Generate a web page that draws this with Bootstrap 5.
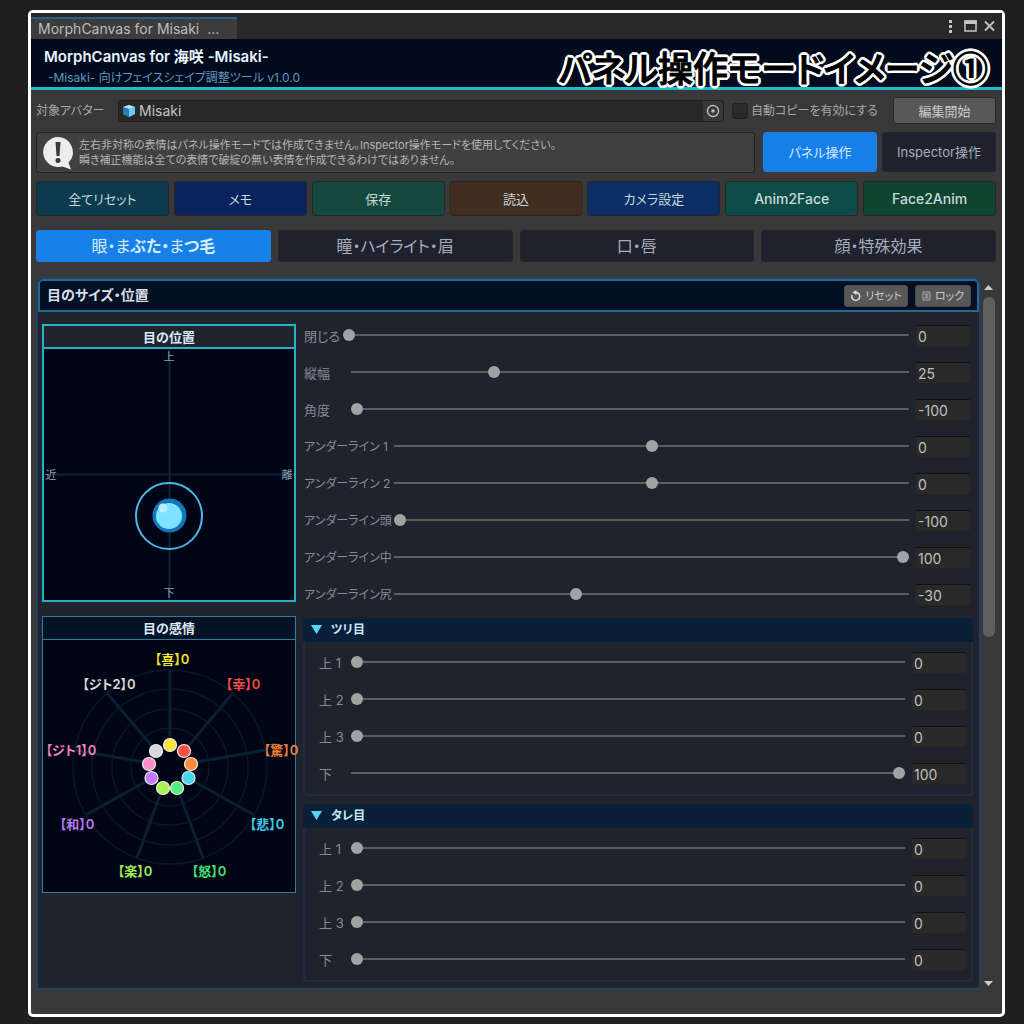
<!DOCTYPE html>
<html lang="ja">
<head>
<meta charset="utf-8">
<meta name="viewport" content="width=device-width, initial-scale=1">
<title>MorphCanvas for Misaki</title>
<link rel="stylesheet" href="https://cdn.jsdelivr.net/npm/bootstrap@5.3.0/dist/css/bootstrap.min.css">
<style>
body{background:#1f1f1f;color:#b4b4b4;font:14px/20px Inter,"Noto Sans CJK JP",sans-serif;font-feature-settings:"palt";min-height:100vh;padding:10px 19px 7px 28px}
button,input{font-feature-settings:inherit}
.win{background:#383838;border:3px solid #fff;border-radius:5px}
.tabbar{background:#282828;height:26px}
.tab-item{background:#3c3c3c;border-top:2px solid #2c5d87;color:#bdbdbd;width:206px;height:22px;padding-left:7px;white-space:pre}
.hero{background:#020a1e;border-bottom:3px solid #20bccb;height:51px;padding:7px 12px 0 13px}
.hero h1{font-size:15px;line-height:22px;font-weight:600;color:#e6f6ff}
.hero p{font-size:12px;line-height:20px;color:#5f98c0;padding-left:4px}
.caption{right:14px;top:3px;font-family:"Noto Sans CJK JP",sans-serif;font-size:35px;line-height:50px;font-weight:500;color:#000;-webkit-text-stroke:1px #000;white-space:nowrap;
text-shadow:3px 0 #fff,-3px 0 #fff,0 3px #fff,0 -3px #fff,2px 2px #fff,-2px 2px #fff,2px -2px #fff,-2px -2px #fff,3px 1px #fff,3px -1px #fff,-3px 1px #fff,-3px -1px #fff,1px 3px #fff,-1px 3px #fff,1px -3px #fff,-1px -3px #fff}
.body-pad{padding:7px 6px 0 5px}
.field-label{font-size:12px;color:#a8a8a8;white-space:nowrap}
.objfield{background:#282828;border:1px solid #202020;border-radius:3px;height:22px}
.objfield button{background:#373737;border:0;width:20px;height:20px;border-radius:0 2px 2px 0}
.check-dark{appearance:none;width:16px;height:16px;background:#2a2a2a;border:1px solid #202020;border-radius:3px;margin:0}
.ub{border:1px solid #262626;border-radius:3px;background:#585858;color:#c8c8c8;font-size:13px;line-height:18px;padding:0;text-align:center;white-space:nowrap}
.help{background:#404040;border:1px solid #232323;border-radius:3px;height:41px;font-size:11px;line-height:15px;padding:4px 6px}
.blue,.ub.blue{background:#1680e8;border-color:#1680e8;color:#d6eaff}
.dark,.ub.dark{background:#1f222d;border-color:#22252f;color:#a6adba}
.tall{height:40px}
.tool{height:35px;color:#c6dadd}
.tool.latin{font-size:14px;font-weight:500}
.maintab{height:32px;font-size:16px}
.c1{background:#0b3b4c}.c2{background:#0b235c}.c3{background:#15483d}.c4{background:#432c20}.c5{background:#0b2f66}.c6{background:#0d4c46}.c7{background:#0f452f}
.panel{background:#20232e;border:2px solid #24405c;border-radius:5px 5px 5px 0;padding-bottom:6px}
.panel-head{background:#031024;border:2px solid #226a90;border-radius:5px 5px 0 0;height:33px;padding:0 6px 0 7px}
.panel-head h2{font-size:14px;font-weight:700;color:#d8dde4}
.small-btn{height:22px;font-size:11px;border-color:#4a4a4a}
.cols{padding:12px 8px 0 4px}
.left-col{width:254px;flex:none}
.pad-box{border:1px solid #2a7f9f;background:#000515}
.pad-box.on{border:2px solid #25b2c4}
.pad-box h3{font-size:13px;line-height:22px;height:23px;font-weight:700;color:#dbeaf5;text-align:center;background:#051124;border-bottom:1px solid #2a7f9f}
.pad-box.on h3{background:#20242e;border-bottom:2px solid #25b2c4}
.pad-box svg{display:block;width:100%;overflow:visible}
.rows{display:flex;flex-direction:column;gap:15px}
.srow{display:flex;align-items:center;height:22px}
.srow label{font-size:13px;line-height:20px;color:#858a93;white-space:pre;flex:none}
.w-a{width:39px}.w-b{width:47px}.srow .w-c{width:90px;font-size:12px}.w-d{width:32px}
.srow input[type=range]{appearance:none;background:none;flex:1;min-width:0;height:20px;margin:0 6px 2px 0;padding:0}
.srow input[type=range]::-webkit-slider-runnable-track{height:2px;background:#5e5e5e}
.srow input[type=range]::-webkit-slider-thumb{appearance:none;width:12px;height:12px;border-radius:50%;background:#a3a2a2;margin-top:-5px}
.srow input[type=number]{appearance:textfield;width:56px;height:22px;background:#292929;border:1px solid #242424;border-top-color:#111;border-radius:3px;color:#c0c0c0;font-size:14px;line-height:20px;padding:0 2px}
.fold{border:2px solid #1b2e42;border-top:0;border-radius:4px;margin-left:-1px;margin-right:-2px}
.fold-head{background:#0a1f38;color:#c4e9f7;font-size:12px;line-height:24px;font-weight:700;margin:0 -2px;width:calc(100% + 4px);border:0;border-radius:4px 4px 0 0;height:24px;padding:0 8px;text-align:left}
.fold .rows{padding:10px 4px 9px 14px}
.sbar{width:15px;flex:none;padding:8px 0 1px 1px}
.sthumb{width:12px;height:340px;border-radius:6px;background:#5f5f5f}
</style>
</head>
<body class="d-flex flex-column">
<main class="win flex-grow-1 d-flex flex-column">
  <div class="tabbar d-flex justify-content-between align-items-end">
    <div class="tab-item">MorphCanvas for Misaki  ...</div>
    <div class="d-flex align-self-center align-items-center pe-1 gap-1">
      <svg width="14" height="16" fill="#c4c4c4"><path d="M5 2h3v3H5zM5 7h3v3H5zM5 12h3v3H5z"/></svg>
      <svg width="16" height="16"><path d="M3 3h11v10H3z" fill="none" stroke="#c4c4c4" stroke-width="1.500"/><path d="M2.300 2.300h12.400v3.700h-12.400z" fill="#c4c4c4"/></svg>
      <svg width="16" height="16"><path d="M3 3.500l9 9m0-9l-9 9" stroke="#c4c4c4" stroke-width="1.800"/></svg>
    </div>
  </div>
  <header class="hero position-relative">
    <h1 class="m-0">MorphCanvas for 海咲 -Misaki-</h1>
    <p class="m-0">-Misaki- 向けフェイスシェイプ調整ツール v1.0.0</p>
    <div class="caption position-absolute">パネル操作モードイメージ①</div>
  </header>
  <div class="body-pad flex-grow-1">
    <div class="d-flex align-items-center">
      <label for="avatar" class="field-label" style="width:82px">対象アバター</label>
      <div class="objfield d-flex align-items-center flex-grow-1 ps-1" style="margin-right:8px">
        <svg width="12" height="14" viewBox="0 0 12 14"><path d="M0 3l6-2 6 2v7l-6 3-6-3z" fill="#3fa3d8"/><path d="M0 3l6-2 6 2-6 2z" fill="#b4e6fb"/><path d="M0 3l6 2v8l-6-3z" fill="#2e7ba9"/><path d="M6 5l6-2v7l-6 3z" fill="#6ccdf4"/></svg>
        <input id="avatar" class="bg-transparent border-0 p-0 ms-1 flex-grow-1" style="color:#c4c4c4" value="Misaki" readonly>
        <button type="button" class="p-0 d-flex align-items-center justify-content-center" aria-label="選択"><svg width="14" height="14"><circle cx="7" cy="7" r="5.500" fill="none" stroke="#bbb" stroke-width="1.400"/><circle cx="7" cy="7" r="1.800" fill="#bbb"/></svg></button>
      </div>
      <input type="checkbox" class="check-dark" id="auto">
      <label for="auto" class="field-label" style="width:145px;padding-left:3px">自動コピーを有効にする</label>
      <button class="ub" type="button" style="width:103px;height:27px">編集開始</button>
    </div>
    <div class="d-flex mt-2">
      <div class="help flex-grow-1 d-flex align-items-center">
        <svg class="flex-shrink-0" width="32" height="34" viewBox="0 0 32 34"><path d="M15 1a15 15 0 1 0 4 29.500q4 1 9 3l-2.500-7A15 15 0 0 0 15 1z" fill="#ededed"/><path d="M12.500 6h5l-1 14h-3z" fill="#3a3a3a"/><circle cx="15" cy="24.500" r="2.500" fill="#3a3a3a"/></svg>
        <div class="ms-1">左右非対称の表情はパネル操作モードでは作成できません。Inspector操作モードを使用してください。<br>瞬き補正機能は全ての表情で破綻の無い表情を作成できるわけではありません。</div>
      </div>
      <button class="ub blue tall" type="button" style="width:114px;margin-left:8px">パネル操作</button>
      <button class="ub dark tall" type="button" style="width:114px;margin-left:5px">Inspector操作</button>
    </div>
    <div class="d-flex mt-2" style="gap:5px">
      <button type="button" class="ub tool flex-fill w-100 c1">全てリセット</button>
      <button type="button" class="ub tool flex-fill w-100 c2">メモ</button>
      <button type="button" class="ub tool flex-fill w-100 c3">保存</button>
      <button type="button" class="ub tool flex-fill w-100 c4">読込</button>
      <button type="button" class="ub tool flex-fill w-100 c5">カメラ設定</button>
      <button type="button" class="ub tool latin flex-fill w-100 c6">Anim2Face</button>
      <button type="button" class="ub tool latin flex-fill w-100 c7">Face2Anim</button>
    </div>
    <div class="d-flex" style="gap:7px;margin-top:14px">
      <button type="button" class="ub maintab w-100 blue">眼・ま<b>ぶた・</b>ま<b>つ毛</b></button>
      <button type="button" class="ub maintab w-100 dark">瞳・ハイライト・眉</button>
      <button type="button" class="ub maintab w-100 dark">口・唇</button>
      <button type="button" class="ub maintab w-100 dark">顔・特殊効果</button>
    </div>
    <div class="d-flex" style="margin-top:15px">
      <section class="panel flex-grow-1">
        <div class="panel-head d-flex align-items-center">
          <h2 class="m-0 me-auto">目のサイズ・位置</h2>
          <button type="button" class="ub small-btn d-flex align-items-center justify-content-center gap-1" style="width:64px"><svg width="11" height="12"><path d="M2 5a4 4 0 1 0 3-2.500" fill="none" stroke="#ddd" stroke-width="1.500"/><path d="M6.500 0v5L2.500 2.500z" fill="#ddd"/></svg>リセット</button>
          <button type="button" class="ub small-btn d-flex align-items-center justify-content-center gap-1" style="width:56px;margin-left:7px"><svg width="9" height="10"><path d="M1 1h7v8H1zM2.500 3h4M2.500 7h4M2.500 3l4 4M6.500 3l-4 4" fill="none" stroke="#bbb" stroke-width=".8"/></svg>ロック</button>
        </div>
        <div class="cols d-flex" style="gap:8px">
          <div class="left-col d-flex flex-column" style="gap:14px">
            <div class="pad-box on">
              <h3 class="m-0">目の位置</h3>
              <svg viewBox="0 0 250 251" font-size="11" fill="#8aa0b0" text-anchor="middle" role="img" aria-label="目の位置">
                <path d="M125.500 0v251M0 125.500h250" stroke="#0d2438" stroke-width="2"/>
                <text x="125" y="12">上</text><text x="125" y="248">下</text><text x="7" y="130">近</text><text x="243" y="130">離</text>
                <circle cx="125" cy="167" r="33" fill="none" stroke="#4bb8e6" stroke-width="2"/>
                <circle cx="125.500" cy="166.500" r="17" fill="#1278bd"/><circle cx="125" cy="167" r="13" fill="#7ee3ff"/><circle cx="119" cy="159" r="4.500" fill="#b8eeff"/>
              </svg>
            </div>
            <div class="pad-box">
              <h3 class="m-0">目の感情</h3>
              <svg viewBox="0 0 252 252" font-size="13" font-weight="600" text-anchor="middle" role="img" aria-label="目の感情">
                <g fill="none" stroke="#071727" stroke-width="1.500"><circle cx="127" cy="127" r="39"/><circle cx="127" cy="127" r="58"/><circle cx="127" cy="127" r="78"/><circle cx="127" cy="127" r="97"/></g>
                <path stroke="#092033" stroke-width="3" d="M127 106V30M141 111L190 53M148 123L223 110M145 138L211 175M134 147L160 218M120 147L94 218M109 138L43 175M106 123L31 110M113 111L64 53"/>
                <g stroke="#eee" stroke-width="1.200"><circle cx="127" cy="105" r="6.500" fill="#ffe53b"/><circle cx="141" cy="111" r="6.500" fill="#ff5147"/><circle cx="148" cy="124" r="6.500" fill="#ff8a3c"/><circle cx="145.500" cy="138" r="6.500" fill="#45d6ef"/><circle cx="134" cy="148" r="6.500" fill="#55ef7c"/><circle cx="120" cy="148" r="6.500" fill="#a6f352"/><circle cx="108.500" cy="138" r="6.500" fill="#c27dff"/><circle cx="106" cy="124" r="6.500" fill="#ff8cc8"/><circle cx="113" cy="111" r="6.500" fill="#d8d8d8"/></g>
                <text x="129" y="24" fill="#f2df36">【喜】0</text><text x="200" y="49" fill="#f24a44">【幸】0</text><text x="238" y="115" fill="#f08038">【驚】0</text><text x="224" y="189" fill="#42cfe8">【悲】0</text><text x="166" y="236" fill="#46e070">【怒】0</text><text x="92" y="236" fill="#a0ea50">【楽】0</text><text x="34" y="189" fill="#b577f0">【和】0</text><text x="28" y="115" fill="#ee80bb">【ジト1】0</text><text x="66" y="49" fill="#d8d8d8">【ジト2】0</text>
              </svg>
            </div>
          </div>
          <div class="flex-grow-1">
            <div class="rows" style="padding-top:1px">
              <div class="srow"><label class="w-a" for="s1">閉じる</label><input id="s1" type="range" value="0"><input type="number" value="0" aria-label="閉じる"></div>
              <div class="srow"><label class="w-b" for="s2">縦幅</label><input id="s2" type="range" value="25"><input type="number" value="25" aria-label="縦幅"></div>
              <div class="srow"><label class="w-b" for="s3">角度</label><input id="s3" type="range" min="-100" value="-100"><input type="number" value="-100" aria-label="角度"></div>
              <div class="srow"><label class="w-c" for="s4">アンダーライン 1</label><input id="s4" type="range" min="-100" value="0"><input type="number" value="0" aria-label="アンダーライン 1"></div>
              <div class="srow"><label class="w-c" for="s5">アンダーライン 2</label><input id="s5" type="range" min="-100" value="0"><input type="number" value="0" aria-label="アンダーライン 2"></div>
              <div class="srow"><label class="w-c" for="s6">アンダーライン頭</label><input id="s6" type="range" min="-100" value="-100"><input type="number" value="-100" aria-label="アンダーライン頭"></div>
              <div class="srow"><label class="w-c" for="s7">アンダーライン中</label><input id="s7" type="range" min="-100" value="100"><input type="number" value="100" aria-label="アンダーライン中"></div>
              <div class="srow"><label class="w-c" for="s8">アンダーライン尻</label><input id="s8" type="range" min="-100" value="-30"><input type="number" value="-30" aria-label="アンダーライン尻"></div>
            </div>
            <div class="fold" style="margin-top:12px">
              <button type="button" class="fold-head d-flex align-items-center"><svg class="me-2" width="12" height="10"><path d="M0 0h11L5.500 9z" fill="#58d5fa"/></svg>ツリ目</button>
              <div class="rows">
                <div class="srow"><label class="w-d" for="t1">上 1</label><input id="t1" type="range" value="0"><input type="number" value="0" aria-label="ツリ目 上 1"></div>
                <div class="srow"><label class="w-d" for="t2">上 2</label><input id="t2" type="range" value="0"><input type="number" value="0" aria-label="ツリ目 上 2"></div>
                <div class="srow"><label class="w-d" for="t3">上 3</label><input id="t3" type="range" value="0"><input type="number" value="0" aria-label="ツリ目 上 3"></div>
                <div class="srow"><label class="w-d" for="t4">下</label><input id="t4" type="range" value="100"><input type="number" value="100" aria-label="ツリ目 下"></div>
              </div>
            </div>
            <div class="fold mt-2">
              <button type="button" class="fold-head d-flex align-items-center"><svg class="me-2" width="12" height="10"><path d="M0 0h11L5.500 9z" fill="#58d5fa"/></svg>タレ目</button>
              <div class="rows">
                <div class="srow"><label class="w-d" for="u1">上 1</label><input id="u1" type="range" value="0"><input type="number" value="0" aria-label="タレ目 上 1"></div>
                <div class="srow"><label class="w-d" for="u2">上 2</label><input id="u2" type="range" value="0"><input type="number" value="0" aria-label="タレ目 上 2"></div>
                <div class="srow"><label class="w-d" for="u3">上 3</label><input id="u3" type="range" value="0"><input type="number" value="0" aria-label="タレ目 上 3"></div>
                <div class="srow"><label class="w-d" for="u4">下</label><input id="u4" type="range" value="0"><input type="number" value="0" aria-label="タレ目 下"></div>
              </div>
            </div>
          </div>
        </div>
      </section>
      <div class="sbar d-flex flex-column align-items-center">
        <svg class="flex-shrink-0" width="10" height="12"><path d="M0 5l4.500-5L9 5z" fill="#ccc"/></svg>
        <div class="sthumb"></div>
        <svg class="mt-auto flex-shrink-0" width="10" height="10"><path d="M0 2h9L4.500 7z" fill="#ccc"/></svg>
      </div>
    </div>
  </div>
</main>
<script src="https://cdn.jsdelivr.net/npm/bootstrap@5.3.0/dist/js/bootstrap.bundle.min.js"></script>
</body>
</html>
